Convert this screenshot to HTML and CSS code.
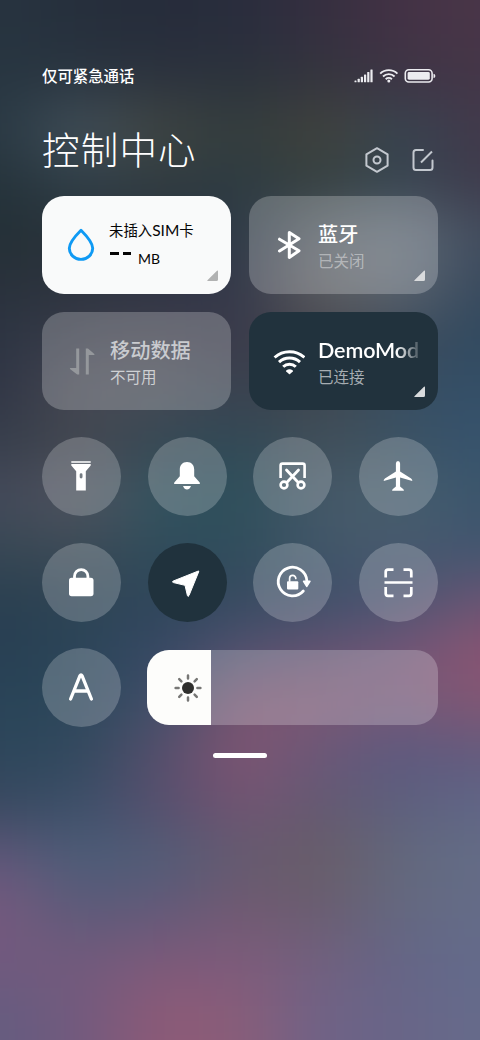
FILE: index.html
```html
<!DOCTYPE html>
<html lang="zh-CN">
<head>
<meta charset="utf-8">
<title>控制中心</title>
<link rel="stylesheet" href="styles.css">
</head>
<body>
<div class="screen">
  <div class="wallpaper" aria-hidden="true">
    <i></i><i></i><i></i><i></i><i></i><i></i><i></i><i></i><i></i><i></i>
    <i></i><i></i><i></i><i></i><i></i><i></i><i></i><i></i><i></i><i></i>
  </div>
  <main class="panel">
    <div class="status">
      <span class="carrier">仅可紧急通话</span>
      <svg class="status-icons" width="84" height="16" viewBox="0 0 84 16" fill="none" stroke="#ececf0">
        <g fill="#ececf0" stroke="none">
          <rect x=".5" y="12.5" width="2" height="1.7" rx=".5"/><rect x="3.6" y="10.8" width="2.2" height="3.4" rx=".5"/>
          <rect x="6.8" y="8.8" width="2.2" height="5.4" rx=".5"/><rect x="10" y="6.5" width="2.2" height="7.7" rx=".5"/>
          <rect x="13.2" y="4" width="2.2" height="10.2" rx=".5"/><rect x="16.4" y="1.5" width="2.2" height="12.7" rx=".5"/>
        </g>
        <g stroke-width="1.9"><path d="M26.2 5.6a12.3 12.3 0 0 1 17.2 0"/><path d="M29 8.5a8.3 8.3 0 0 1 11.6 0"/><path d="M31.7 11.2a4.5 4.5 0 0 1 6.2 0"/></g>
        <circle cx="34.8" cy="13" r="1.5" fill="#ececf0" stroke="none"/>
        <rect x="51.3" y="1.8" width="26.8" height="12.2" rx="3.5" stroke-width="1.6"/>
        <rect x="53.6" y="4.1" width="22.2" height="7.6" rx="1.4" fill="#ececf0" stroke="none"/>
        <path d="M79.5 5.7q1.9.4 1.9 2.2t-1.9 2.2z" fill="#ececf0" stroke="none"/>
      </svg>
    </div>
    <header class="heading">
      <h1 class="title">控制中心</h1>
      <svg class="tool" width="26" height="28" viewBox="0 0 26 28" fill="none" stroke="#c3c8cf" stroke-width="2" stroke-linejoin="round"><path d="M13 2.2 23.6 8.3V19.7L13 25.8 2.4 19.7V8.3z"/><circle cx="13" cy="14" r="3.5"/></svg>
      <svg class="tool" width="22" height="24" viewBox="0 0 22 24" fill="none" stroke="#c3c8cf" stroke-width="2" stroke-linecap="round" stroke-linejoin="round"><path d="M11 2H4Q1.500 2 1.500 4.500V19.500Q1.500 22 4 22H18Q20.500 22 20.500 19.500V12.500"/><path d="M9 14.500 20 3.500" stroke-linecap="butt"/></svg>
    </header>

    <section class="tiles">
      <article class="tile tile-data">
        <svg class="tile-icon" width="32" height="36" viewBox="0 0 32 36" fill="none" stroke="#0f9af4" stroke-width="2.9" stroke-linejoin="round"><path d="M16 3.2C12.2 7 4.300 15.500 4.300 21.200a11.700 11.200 0 0 0 23.400 0C27.700 15.500 19.800 7 16 3.200z"/></svg>
        <div class="tile-text"><span class="sim">未插入<span class="latin">SIM</span>卡</span><span class="usage"><b class="dashes"><i></i><i></i></b>MB</span></div>
        <svg class="corner" width="11" height="11" viewBox="0 0 11 11"><path d="M11 1.200V9.500Q11 11 9.500 11H1Q-.2 11 .7 10.100L10 .8Q11 0 11 1.200z"/></svg>
      </article>
      <article class="tile">
        <svg class="tile-icon" width="32" height="36" viewBox="0 0 32 36" fill="none" stroke="#fff" stroke-width="3" stroke-linejoin="round" stroke-linecap="round"><path d="M6.500 12.200 26 23.800 16.300 30.500V5.500L26 11.800 6.500 24"/></svg>
        <div class="tile-text"><span class="name">蓝牙</span><span class="state dim">已关闭</span></div>
        <svg class="corner" width="11" height="11" viewBox="0 0 11 11"><path d="M11 1.200V9.500Q11 11 9.500 11H1Q-.2 11 .7 10.100L10 .8Q11 0 11 1.200z"/></svg>
      </article>
      <article class="tile tile-disabled">
        <svg class="tile-icon" width="32" height="36" viewBox="0 0 32 36" fill="#95989c"><path d="M11.200 5.500h3v26h-2L5 26q-.5-1 .5-1h5.700zM20.800 31.500h3V12H29q1 0 .3-1L23 5.500h-2.200z"/></svg>
        <div class="tile-text"><span class="name">移动数据</span><span class="state">不可用</span></div>
      </article>
      <article class="tile tile-wifi">
        <svg class="tile-icon" width="32" height="36" viewBox="0 0 32 36" fill="none" stroke="#fff" stroke-width="3"><path d="M1.600 14.500a22 22 0 0 1 29.800 0M6 19.200a15.500 15.500 0 0 1 21 0M10.200 23.700a9 9 0 0 1 12.600 0"/><path d="M13.200 27.500q3.300-2.500 6.600 0 .5.500 0 1L17 31q-.5.400-1 0l-2.800-2.500q-.5-.5 0-1z" fill="#fff" stroke="none"/></svg>
        <div class="tile-text"><span class="name ssid">DemoMod</span><span class="state dim">已连接</span></div>
        <svg class="corner" width="11" height="11" viewBox="0 0 11 11"><path d="M11 1.200V9.500Q11 11 9.500 11H1Q-.2 11 .7 10.100L10 .8Q11 0 11 1.200z"/></svg>
      </article>
    </section>

    <section class="toggles">
      <div class="round"><svg viewBox="0 0 40 40"><path d="M10.300 5.300h19.400v1.500H10.300zM10.300 8h19.400v1.500l-4.900 5.700V34.500h-9.600V15.200L10.300 9.500z" fill="#fff"/><rect x="18.700" y="17.300" width="2.800" height="5.200" rx="1.400" fill="#747b82"/></svg></div>
      <div class="round"><svg viewBox="0 0 40 40" fill="#fff"><path d="M20 6c-4.600 0-7.200 3.200-7.200 7.600v6.600L7.300 26.500q-1 1.500.7 1.500h24q1.700 0 .7-1.500l-5.500-6.300v-6.600C27.200 9.200 24.600 6 20 6zM16 30h8q-1.400 3.600-4 3.600T16 30z"/></svg></div>
      <div class="round"><svg viewBox="0 0 40 40" fill="none" stroke="#fff" stroke-width="2.600"><path d="M8.600 22V9.500Q8.600 7.600 10.500 7.600h20.200q1.900 0 1.900 1.900V22"/><path d="M14.500 14 26 26.200M26.500 14 15 26.200" stroke-width="2.800" stroke-linecap="round"/><circle cx="12" cy="29" r="3.400"/><circle cx="29" cy="29" r="3.400"/></svg></div>
      <div class="round"><svg viewBox="0 0 40 40" fill="#fff"><path d="M17.900 7.500Q17.900 5 20 5t2.100 2.500v8l11 7Q34.500 23.500 34.300 25l-12.200-3.500v9l3.300 2.700q.5.600.5 1.600H14.100q0-1 .5-1.600l3.300-2.700v-9L5.700 25q-.2-1.500 1.200-2.500l11-7z"/></svg></div>
      <div class="round"><svg viewBox="0 0 40 40"><path d="M13.500 16.500v-2.200a6.700 6.700 0 0 1 13.400 0v2.200" fill="none" stroke="#fff" stroke-width="2.800"/><rect x="8" y="15.800" width="24.500" height="18.400" rx="2.600" fill="#fff"/></svg></div>
      <div class="round round-on"><svg viewBox="0 0 40 40"><path d="M31.400 9Q32 8.500 31.600 10L22 33.500q-1 1.800-1.600 0L18 23.300 6.500 20.600q-2-.8-.2-1.600z" fill="#fff" stroke="#fff" stroke-linejoin="round"/></svg></div>
      <div class="round"><svg viewBox="0 0 40 40" fill="none" stroke="#fff" stroke-width="2.800" stroke-linecap="round"><path d="M34.800 18.500A14.300 14.300 0 1 0 31.300 29"/><path d="M31.500 19.300h6.500L34.700 24.500z" fill="#fff" stroke-width="1.400" stroke-linejoin="round"/><rect x="15" y="19.200" width="11.300" height="8.300" rx="1" fill="#fff" stroke="none"/><path d="M17.600 19v-2.500a3.100 3.100 0 0 1 6.200 0" stroke-width="1.700"/></svg></div>
      <div class="round"><svg viewBox="0 0 40 40" fill="none" stroke="#fff" stroke-width="2.700"><path d="M7.700 15.500V10Q7.700 7.700 10 7.700h5.500M25.500 7.700H31q2.300 0 2.300 2.300v5.500M33.300 25v6.500q0 2.300-2.300 2.300h-5.500M15.500 33.800H10q-2.300 0-2.300-2.300V25M6.500 20.500h28"/></svg></div>
    </section>

    <section class="bottom">
      <div class="round"><svg viewBox="0 0 40 40" fill="none" stroke="#fff" stroke-width="3.300" stroke-linecap="round" stroke-linejoin="round" role="img" aria-label="自动亮度"><path d="M9.600 32 18.900 8.900q1.100-1.900 2.200 0L30.400 32M13.200 24H26.800"/></svg></div>
      <div class="slider"><div class="level">
        <svg width="30" height="30" viewBox="0 0 30 30"><circle cx="15" cy="15" r="6" fill="#2f2f2d"/><path d="M15 2.600v3M15 24.400v3M2.600 15h3M24.400 15h3M6.200 6.200l2.200 2.200M21.600 21.600l2.200 2.200M23.800 6.200l-2.200 2.200M8.400 21.600l-2.200 2.200" stroke="#777775" stroke-width="2.500" stroke-linecap="round"/></svg>
      </div></div>
    </section>
    <div class="handle"></div>
  </main>
</div>
</body>
</html>
```
FILE: styles.css
```css
* { box-sizing: border-box; }
body { margin: 0; font-family: "Noto Sans CJK SC", sans-serif; color: #fff; }
.screen { display: grid; width: 480px; height: 1040px; overflow: hidden; background: #33475a; }

/* Soft colour bands blended into one blurred backdrop */
.wallpaper, .panel { grid-area: 1 / 1; }
.wallpaper { margin: -80px; width: 640px; height: 1200px; filter: blur(27px); }
.wallpaper i {
  display: block; height: 52px;
  background: linear-gradient(90deg, var(--a) 80px, var(--b) 160px, var(--c) 240px, var(--d) 320px, var(--e) 400px, var(--f) 480px, var(--g) 560px);
}
.wallpaper i:first-child, .wallpaper i:last-child { height: 132px; }
.wallpaper i:nth-child(1) { --a:#273440; --b:#262f3c; --c:#262c3a; --d:#292d3d; --e:#352f3f; --f:#433245; --g:#493648; }
.wallpaper i:nth-child(2) { --a:#273641; --b:#2b3641; --c:#2c333e; --d:#2b333d; --e:#34353e; --f:#3d3545; --g:#443648; }
.wallpaper i:nth-child(3) { --a:#2a3944; --b:#44525c; --c:#404541; --d:#333d3e; --e:#43433c; --f:#374551; --g:#42394b; }
.wallpaper i:nth-child(4) { --a:#25333b; --b:#303f49; --c:#303b40; --d:#2d3b41; --e:#354040; --f:#364551; --g:#3f3b4c; }
.wallpaper i:nth-child(5) { --a:#232f36; --b:#2a343a; --c:#2d3541; --d:#2d3946; --e:#565d65; --f:#606b77; --g:#424d5e; }
.wallpaper i:nth-child(6) { --a:#29313b; --b:#2e343f; --c:#303345; --d:#34394a; --e:#5e5f61; --f:#5c6570; --g:#38495d; }
.wallpaper i:nth-child(7) { --a:#2c3442; --b:#3a3d4b; --c:#3f404b; --d:#38394a; --e:#49464e; --f:#3e4b5a; --g:#304a60; }
.wallpaper i:nth-child(8) { --a:#303545; --b:#484a54; --c:#464b56; --d:#38414f; --e:#40474f; --f:#384f63; --g:#344f68; }
.wallpaper i:nth-child(9) { --a:#363e4b; --b:#42464f; --c:#364854; --d:#314956; --e:#414f59; --f:#3b5162; --g:#36536e; }
.wallpaper i:nth-child(10) { --a:#44495a; --b:#525560; --c:#335460; --d:#2d4f5b; --e:#475868; --f:#48606e; --g:#3b556c; }
.wallpaper i:nth-child(11) { --a:#384855; --b:#3e4b56; --c:#2f4c5b; --d:#304d5b; --e:#415769; --f:#47596c; --g:#405570; }
.wallpaper i:nth-child(12) { --a:#2a3f50; --b:#2f4454; --c:#2e465a; --d:#374a60; --e:#3f4f69; --f:#495572; --g:#685574; }
.wallpaper i:nth-child(13) { --a:#273f53; --b:#2b4558; --c:#364864; --d:#505270; --e:#615372; --f:#715677; --g:#8a5372; }
.wallpaper i:nth-child(14) { --a:#294457; --b:#2d475b; --c:#40506a; --d:#785470; --e:#7c5672; --f:#745a78; --g:#825673; }
.wallpaper i:nth-child(15) { --a:#2d465b; --b:#32495e; --c:#564f6d; --d:#7f5472; --e:#6a5878; --f:#5c597f; --g:#635b7e; }
.wallpaper i:nth-child(16) { --a:#394960; --b:#3d506a; --c:#564f6e; --d:#725472; --e:#645971; --f:#5d607d; --g:#606687; }
.wallpaper i:nth-child(17) { --a:#60577a; --b:#4c5e78; --c:#515d77; --d:#645a70; --e:#695d67; --f:#62687c; --g:#646d86; }
.wallpaper i:nth-child(18) { --a:#76597e; --b:#5c5b79; --c:#63597a; --d:#725a71; --e:#695d70; --f:#646880; --g:#646c88; }
.wallpaper i:nth-child(19) { --a:#71597e; --b:#725b7c; --c:#7c597a; --d:#7d5b7b; --e:#71607e; --f:#646586; --g:#636b8b; }
.wallpaper i:nth-child(20) { --a:#655c7f; --b:#725a7e; --c:#8d5a77; --d:#895d79; --e:#6f6286; --f:#686587; --g:#666b8b; }

.panel { padding: 64px 42px 0; z-index: 1; }
.status { display: flex; align-items: center; justify-content: space-between; height: 24px; }
.carrier { font-size: 15.4px; font-weight: 500; line-height: 24px; margin-top: -2px; }
.status-icons { margin-right: 0; }
.heading { display: flex; align-items: flex-end; height: 88px; padding: 34px 4px 3px 0; gap: 22px; }
.title { margin: -2px auto 0 0; font-size: 37.5px; letter-spacing: 1.2px; font-weight: 300; line-height: 56px; height: 56px; flex: none; align-self: flex-start; }
.tool { margin-bottom: -1px; }
.tool + .tool { margin-bottom: 1px; }

.tiles { display: grid; grid-template-columns: 189px 189px; gap: 18px; margin-top: 20px; }
.tile { position: relative; display: flex; align-items: center; height: 98px; padding-left: 24px; border-radius: 22px; background: rgba(255,255,255,.23); }
.tile-data { background: #f9fafa; color: #050505; }
.tile-data, .tile-disabled { padding-left: 23px; }
.tile-wifi { background: #21323d; }
.tile-icon { flex: none; margin-right: 13px; }
.tile-text { display: flex; flex-direction: column; white-space: nowrap; padding-top: 2px; }
.name { font-size: 20.2px; font-weight: 500; line-height: 28px; }
.state { font-size: 15.5px; line-height: 24px; }
.dim { color: rgba(255,255,255,.43); }
.tile-wifi .dim { color: #a6adb2; }
.tile-disabled .name { color: #c9cbcf; }
.tile-disabled .state { color: #ced0d3; }
.ssid { font-family: Lato, "Noto Sans", sans-serif; font-weight: 600; width: 101px; font-size: 21.5px; letter-spacing: -.1px; overflow: hidden; mask-image: linear-gradient(90deg, #000 78px, transparent 106px); }
.sim { font-size: 14.4px; line-height: 26px; margin-left: -1px; margin-top: -3px; }
.latin { font-family: Lato, sans-serif; font-size: 15.5px; }
.usage { display: flex; align-items: center; gap: 7px; font: 14px/28px Lato, sans-serif; padding-top: 3px; height: 29px; }
.dashes { display: flex; gap: 4px; margin-top: -11px; }
.dashes i { width: 8.5px; height: 3px; background: #050505; }
.corner { position: absolute; right: 13px; bottom: 13px; fill: #d9dbdd; }
.tile-data .corner { fill: #b1b2b2; }

.toggles { display: grid; grid-template-columns: repeat(4, 79px); justify-content: space-between; row-gap: 27px; margin-top: 26.5px; }
.round { width: 79px; height: 79px; border-radius: 50%; display: grid; place-items: center; background: rgba(255,255,255,.21); }
.round svg { width: 40px; height: 40px; margin: 0 1px 1px 0; }
.round-on { background: #20323d; }
.bottom { display: flex; align-items: center; justify-content: space-between; margin-top: 26.5px; }
.slider { width: 291px; height: 75px; border-radius: 22px; overflow: hidden; background: rgba(255,255,255,.23); }
.level { width: 64px; height: 75px; background: #fdfdfb; display: grid; align-items: center; padding-left: 26px; }
.handle { width: 54px; height: 5px; border-radius: 3px; background: #fff; margin: 26px auto 0; }
```
